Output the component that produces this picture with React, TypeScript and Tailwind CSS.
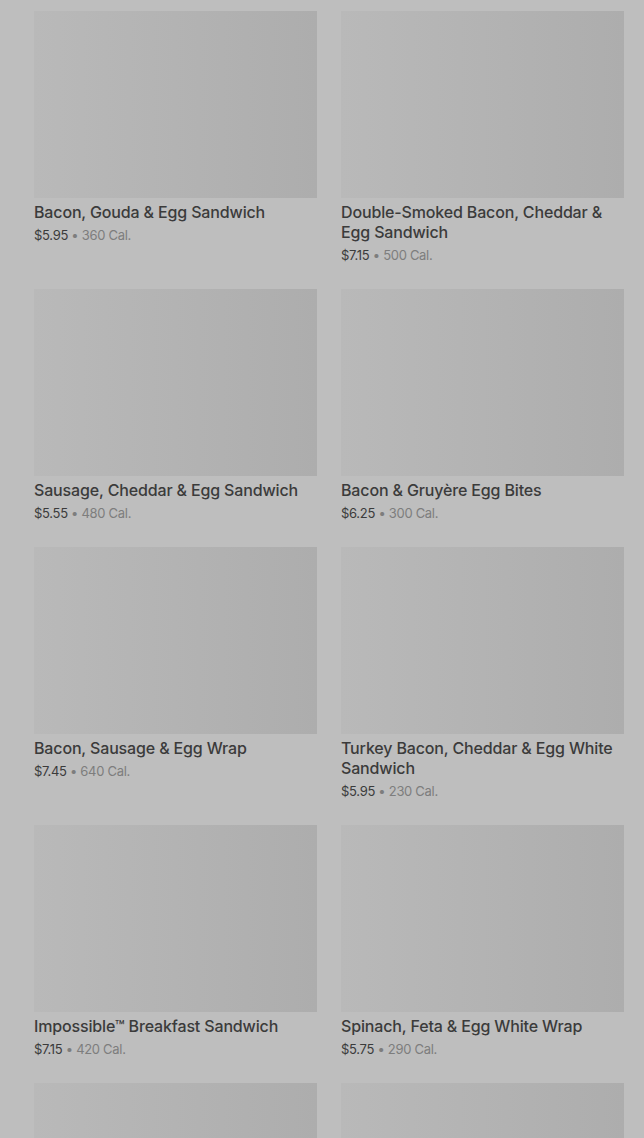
import React from "react";

const items = [
  { name: "Bacon, Gouda & Egg Sandwich", price: "$5.95", cal: "360 Cal." },
  { name: "Double-Smoked Bacon, Cheddar & Egg Sandwich", price: "$7.15", cal: "500 Cal." },
  { name: "Sausage, Cheddar & Egg Sandwich", price: "$5.55", cal: "480 Cal." },
  { name: "Bacon & Gruyère Egg Bites", price: "$6.25", cal: "300 Cal." },
  { name: "Bacon, Sausage & Egg Wrap", price: "$7.45", cal: "640 Cal." },
  { name: "Turkey Bacon, Cheddar & Egg White Sandwich", price: "$5.95", cal: "230 Cal." },
  { name: "Impossible™ Breakfast Sandwich", price: "$7.15", cal: "420 Cal." },
  { name: "Spinach, Feta & Egg White Wrap", price: "$5.75", cal: "290 Cal." },
  { name: "", price: "", cal: "" },
  { name: "", price: "", cal: "" },
];

export default function App() {
  return (
    <div
      className="w-[644px] h-[1138px] overflow-hidden bg-[#bebebe] pl-[34px] pr-[20px] pt-[11px]"
      style={{ fontFamily: "Inter, 'Liberation Sans', sans-serif" }}
    >
      <div className="grid grid-cols-2 gap-x-[24px] gap-y-[24px]">
        {items.map((it, i) => (
          <div key={i} className="flex flex-col">
            <div className="h-[187px] bg-gradient-to-r from-[#b9b9b9] to-[#adadad]" />
            {it.name && (
              <>
                <div className="mt-[4px] text-[16px] leading-[20px] font-medium text-[#3b3b3b] tracking-[-0.15px]">
                  {it.name}
                </div>
                <div className="mt-[3px] text-[13px] leading-[20px] text-[#3b3b3b] tracking-[-0.3px]">
                  {it.price}
                  <span className="text-[#7d7d7d]"> • {it.cal}</span>
                </div>
              </>
            )}
          </div>
        ))}
      </div>
    </div>
  );
}
